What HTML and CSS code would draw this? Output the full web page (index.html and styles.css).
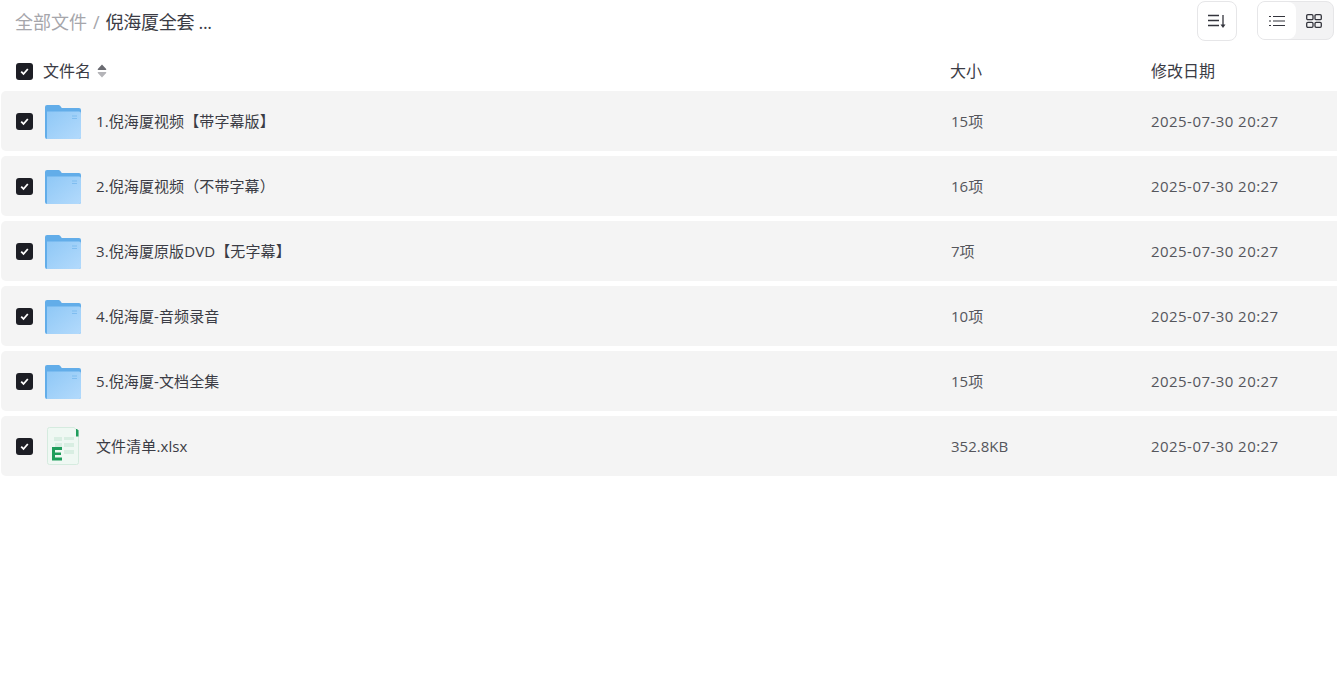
FILE: index.html
```html
<!doctype html>
<html lang="zh">
  <head>
    <meta charset="utf-8">
    <title>倪海厦全套</title>
    <link rel="stylesheet" href="styles.css">
  </head>
  <body>
    <svg class="defs" width="0" height="0">
      <defs>
        <linearGradient id="folderFront" x1="0" y1="0" x2="1" y2="1">
          <stop offset="0" stop-color="#8fc8f6"></stop>
          <stop offset="1" stop-color="#b3dafc"></stop>
        </linearGradient>
        <symbol id="folder" viewBox="0 0 36 34">
          <path d="M0 2a2 2 0 0 1 2-2h11.500a2 2 0 0 1 1.600 .8l1.700 2.200h17.200a2 2 0 0 1 2 2v4h-36z" fill="#62ade9"></path>
          <path d="M0 5h36v4h-36z" fill="#62ade9"></path>
          <path d="M2 6h34v26a2 2 0 0 1-2 2h-32a2 2 0 0 1-2-2v-24z" fill="#62ade9"></path>
          <path d="M2 6.500h32a2 2 0 0 1 2 2v23.500a2 2 0 0 1-2 2h-32z" fill="url(#folderFront)"></path>
          <path d="M27 10.500h5v1h-5zM27 13h5v1h-5z" fill="#7fbdf0"></path>
        </symbol>
        <symbol id="check" viewBox="0 0 17 17">
          <rect width="17" height="17" rx="3" fill="#1d1e25"></rect>
          <path d="M5.200 8.700l2.300 2.300 4.300-5" fill="none" stroke="#fff" stroke-width="1.800"></path>
        </symbol>
      </defs>
    </svg>

    <div class="toolbar">
      <div class="crumbs">
        <span class="crumb-root">全部文件</span>
        <span class="crumb-sep">/</span>
        <span class="crumb-here">倪海厦全套 ...</span>
      </div>
      <div class="tools">
        <button class="sort-btn">
          <svg width="18" height="16" viewBox="0 0 18 16">
            <path d="M0 2.500h11M0 7.500h11M0 12.500h11M15 2v11" fill="none" stroke="#33343c" stroke-width="1.300"></path>
            <path d="M12.500 11.500h5l-2.500 3.500z" fill="#33343c"></path>
          </svg>
        </button>
        <div class="view-switch">
          <div class="view-opt active">
            <svg width="16" height="12" viewBox="0 0 16 12">
              <path d="M0 1.500h2M0 6h2M0 10.500h2M4 1.500h12M4 6h12M4 10.500h12" fill="none" stroke="#33343c" stroke-width="1.200"></path>
            </svg>
          </div>
          <div class="view-opt">
            <svg width="16" height="14" viewBox="0 0 16 14">
              <rect x=".7" y=".7" width="6.300" height="5" rx="1.200" fill="none" stroke="#33343c" stroke-width="1.300"></rect>
              <rect x="9" y=".7" width="6.300" height="5" rx="1.200" fill="none" stroke="#33343c" stroke-width="1.300"></rect>
              <rect x=".7" y="8.300" width="6.300" height="5" rx="1.200" fill="none" stroke="#33343c" stroke-width="1.300"></rect>
              <rect x="9" y="8.300" width="6.300" height="5" rx="1.200" fill="none" stroke="#33343c" stroke-width="1.300"></rect>
            </svg>
          </div>
        </div>
      </div>
    </div>

    <div class="head-row">
      <div class="col-check"><svg class="check"><use href="#check"></use></svg></div>
      <div class="head-name">
        文件名
        <svg class="sort-arrows" width="10" height="14" viewBox="0 0 10 14">
          <path d="M5 .5l4.200 4.500a.6 .6 0 0 1-.4 1h-7.600a.6 .6 0 0 1-.4-1z" fill="#6a6b71"></path>
          <path d="M5 13.500l4.200-4.500a.6 .6 0 0 0-.4-1h-7.600a.6 .6 0 0 0-.4 1z" fill="#b4b4b8"></path>
        </svg>
      </div>
      <div class="head-size">大小</div>
      <div class="head-date">修改日期</div>
    </div>

    <div class="file-list">
      <div class="file-row">
        <div class="col-check"><svg class="check"><use href="#check"></use></svg></div>
        <svg class="folder"><use href="#folder"></use></svg>
        <div class="col-name">1.倪海厦视频【带字幕版】</div>
        <div class="col-size">15项</div>
        <div class="col-date">2025-07-30 20:27</div>
      </div>
      <div class="file-row">
        <div class="col-check"><svg class="check"><use href="#check"></use></svg></div>
        <svg class="folder"><use href="#folder"></use></svg>
        <div class="col-name">2.倪海厦视频（不带字幕）</div>
        <div class="col-size">16项</div>
        <div class="col-date">2025-07-30 20:27</div>
      </div>
      <div class="file-row">
        <div class="col-check"><svg class="check"><use href="#check"></use></svg></div>
        <svg class="folder"><use href="#folder"></use></svg>
        <div class="col-name">3.倪海厦原版DVD【无字幕】</div>
        <div class="col-size">7项</div>
        <div class="col-date">2025-07-30 20:27</div>
      </div>
      <div class="file-row">
        <div class="col-check"><svg class="check"><use href="#check"></use></svg></div>
        <svg class="folder"><use href="#folder"></use></svg>
        <div class="col-name">4.倪海厦-音频录音</div>
        <div class="col-size">10项</div>
        <div class="col-date">2025-07-30 20:27</div>
      </div>
      <div class="file-row">
        <div class="col-check"><svg class="check"><use href="#check"></use></svg></div>
        <svg class="folder"><use href="#folder"></use></svg>
        <div class="col-name">5.倪海厦-文档全集</div>
        <div class="col-size">15项</div>
        <div class="col-date">2025-07-30 20:27</div>
      </div>
      <div class="file-row">
        <div class="col-check"><svg class="check"><use href="#check"></use></svg></div>
        <svg class="sheet" width="32" height="38" viewBox="0 0 32 38">
          <path d="M2.500 .5h24.500l4.500 4v31a2 2 0 0 1-2 2h-27a2 2 0 0 1-2-2v-33a2 2 0 0 1 2-2z" fill="#eff8f3" stroke="#d5ebdf"></path>
          <path d="M29 2h1l1.500 1.500v6h-2.500z" fill="#1f9d5c"></path>
          <path d="M7 10h8v4h-8zM17 10h10v3h-10zM8 16h7v4h-7zM17 16h10v4h-10zM17 23h10v4h-10z" fill="#d8eee2"></path>
          <path d="M5 20h10v3h-7v2.500h6v2.500h-6v2.500h7v3h-10z" fill="#1f9d5c"></path>
        </svg>
        <div class="col-name">文件清单.xlsx</div>
        <div class="col-size">352.8KB</div>
        <div class="col-date">2025-07-30 20:27</div>
      </div>
    </div>
  </body>
</html>
```

FILE: styles.css
```css
body {
  background: #fff;
  color: #3b3c45;
  font: 15px/20px "Open Sans", "Noto Sans CJK SC", sans-serif;
  margin: 0;
  padding: 0;
  overflow: hidden;
}

.defs {
  display: block;
  height: 0;
}

.toolbar {
  align-items: flex-start;
  display: flex;
  height: 48px;
  justify-content: space-between;
}

.crumbs {
  align-items: center;
  display: flex;
  font-size: 18px;
  gap: 6px;
  height: 44px;
  padding-left: 15px;
}
.crumb-root, .crumb-sep {
  color: #a6a6ab;
}
.crumb-here {
  color: #3b3c45;
  letter-spacing: -.3px;
}

.tools {
  display: flex;
  gap: 20px;
  padding: 1px 3px 0 0;
}

.sort-btn {
  align-items: center;
  background: #fff;
  border: 1px solid #e6e6e8;
  border-radius: 8px;
  display: flex;
  height: 40px;
  justify-content: center;
  padding: 0;
  width: 40px;
}

.view-switch {
  background: #f3f3f4;
  border: 1px solid #e6e6e8;
  border-radius: 8px;
  display: flex;
  height: 37px;
  overflow: hidden;
  width: 75px;
}
.view-opt {
  align-items: center;
  display: flex;
  flex: 1;
  justify-content: center;
}
.view-opt.active {
  background: #fff;
  border-radius: 0 8px 8px 0;
}

.head-row, .file-row {
  align-items: center;
  display: flex;
}

.head-row {
  font-size: 16px;
  height: 43px;
  padding-left: 1px;
}
.head-row .col-check {
  padding-top: 3px;
}

.file-list {
  display: flex;
  flex-direction: column;
  gap: 5px;
  margin-right: -6px;
  padding-left: 1px;
}
.file-row {
  background: #f4f4f4;
  border-radius: 5px;
  height: 60px;
}

.col-check {
  display: flex;
  padding-left: 15px;
  width: 17px;
}
.check {
  height: 17px;
  width: 17px;
}
.folder {
  flex: none;
  height: 34px;
  margin: 2px 0 0 12px;
  width: 36px;
}
.sheet {
  flex: none;
  margin: 0 2px 0 14px;
}

.col-name {
  flex: none;
  letter-spacing: .1px;
  padding-left: 15px;
  width: 855px;
}
.col-size {
  color: #55565c;
  flex: none;
  width: 200px;
}
.col-date {
  color: #55565c;
  letter-spacing: .45px;
}

.head-name {
  align-items: center;
  display: flex;
  flex: none;
  gap: 6px;
  padding-left: 10px;
  padding-top: 2px;
  width: 907px;
}
.head-size, .head-date {
  padding-top: 2px;
}
.head-size {
  flex: none;
  width: 201px;
}
```
